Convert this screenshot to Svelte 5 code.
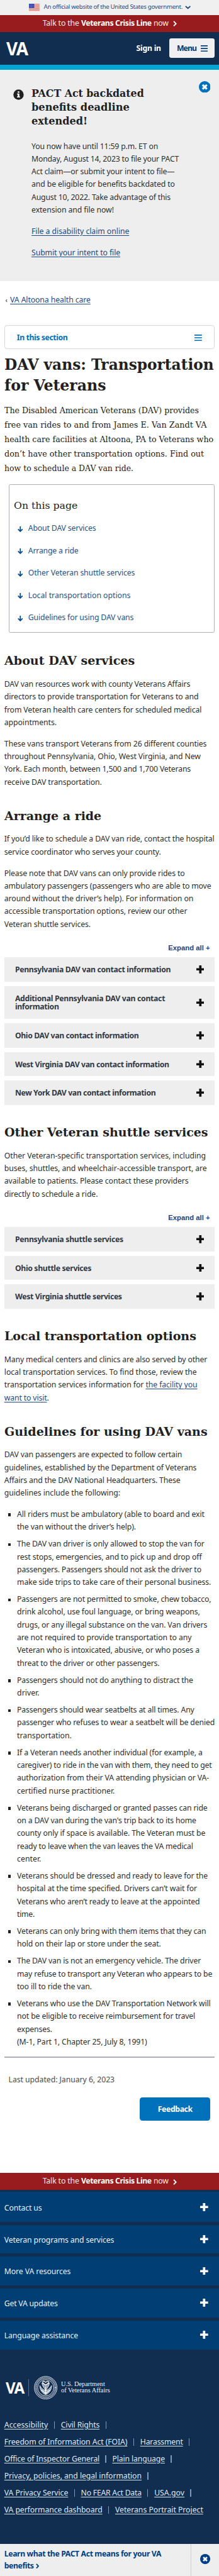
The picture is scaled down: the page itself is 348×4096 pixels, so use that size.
<script>
  // Each text line is [text, width]; the width is the measure it is set to.
  const alertTitle = [['PACT Act backdated', 211.3], ['benefits deadline', 184.3], ['extended!', 105.3]];
  const alertBody = [
    ['You now have until 11:59 p.m. ET on', 237.7],
    ['Monday, August 14, 2023 to file your PACT', 276.7],
    ['Act claim—or submit your intent to file—', 268.7],
    ['and be eligible for benefits backdated to', 269.3],
    ['August 10, 2022. Take advantage of this', 261.3],
    ['extension and file now!', 154.7]
  ];
  const title = [['DAV vans: Transportation', 393.5], ['for Veterans', 191]];
  const intro = [
    ['The Disabled American Veterans (DAV) provides', 365.3],
    ['free van rides to and from James E. Van Zandt VA', 380],
    ['health care facilities at Altoona, PA to Veterans who', 392.7],
    ['don’t have other transportation options. Find out', 375],
    ['how to schedule a DAV van ride.', 242.5]
  ];
  const toc = [
    ['About DAV services', 127.3],
    ['Arrange a ride', 94.3],
    ['Other Veteran shuttle services', 200.3],
    ['Local transportation options', 192.3],
    ['Guidelines for using DAV vans', 198]
  ];
  const about1 = [
    ['DAV van resources work with county Veterans Affairs', 349.3],
    ['directors to provide transportation for Veterans to and', 365],
    ['from Veteran health care centers for scheduled medical', 370.7],
    ['appointments.', 98.3]
  ];
  const about2 = [
    ['These vans transport Veterans from 26 different counties', 380.3],
    ['throughout Pennsylvania, Ohio, West Virginia, and New', 369],
    ['York. Each month, between 1,500 and 1,700 Veterans', 350.3],
    ['receive DAV transportation.', 183.3]
  ];
  const ride1 = [
    ['If you’d like to schedule a DAV van ride, contact the hospital', 394.7],
    ['service coordinator who serves your county.', 294.3]
  ];
  const ride2 = [
    ['Please note that DAV vans can only provide rides to', 339],
    ['ambulatory passengers (passengers who are able to move', 388.7],
    ['around without the driver’s help). For information on', 355.3],
    ['accessible transportation options, review our other', 343.7],
    ['Veteran shuttle services.', 162.3]
  ];
  const vans = [
    [['Pennsylvania DAV van contact information', 292.3]],
    [['Additional Pennsylvania DAV van contact', 281.7], ['information', 82.3]],
    [['Ohio DAV van contact information', 232.3]],
    [['West Virginia DAV van contact information', 289.3]],
    [['New York DAV van contact information', 264]]
  ];
  const other = [
    ['Other Veteran-specific transportation services, including', 378.7],
    ['buses, shuttles, and wheelchair-accessible transport, are', 380.7],
    ['available to patients. Please contact these providers', 346.3],
    ['directly to schedule a ride.', 175.7]
  ];
  const shuttles = [
    [['Pennsylvania shuttle services', 203.3]],
    [['Ohio shuttle services', 143.3]],
    [['West Virginia shuttle services', 200.7]]
  ];
  const guide = [
    ['DAV van passengers are expected to follow certain', 334],
    ['guidelines, established by the Department of Veterans', 361.3],
    ['Affairs and the DAV National Headquarters. These', 330.7],
    ['guidelines include the following:', 217.7]
  ];
  const rules = [
    [['All riders must be ambulatory (able to board and exit', 352], ['the van without the driver’s help).', 223.3]],
    [
      ['The DAV van driver is only allowed to stop the van for', 352],
      ['rest stops, emergencies, and to pick up and drop off', 347],
      ['passengers. Passengers should not ask the driver to', 346.3],
      ['make side trips to take care of their personal business.', 364.3]
    ],
    [
      ['Passengers are not permitted to smoke, chew tobacco,', 364.7],
      ['drink alcohol, use foul language, or bring weapons,', 343.7],
      ['drugs, or any illegal substance on the van. Van drivers', 357.3],
      ['are not required to provide transportation to any', 328],
      ['Veteran who is intoxicated, abusive, or who poses a', 342.7],
      ['threat to the driver or other passengers.', 267.7]
    ],
    [['Passengers should not do anything to distract the', 330.7], ['driver.', 42]],
    [
      ['Passengers should wear seatbelts at all times. Any', 333],
      ['passenger who refuses to wear a seatbelt will be denied', 371.3],
      ['transportation.', 102.7]
    ],
    [
      ['If a Veteran needs another individual (for example, a', 348.3],
      ['caregiver) to ride in the van with them, they need to get', 366],
      ['authorization from their VA attending physician or VA-', 360.7],
      ['certified nurse practitioner.', 183.7]
    ],
    [
      ['Veterans being discharged or granted passes can ride', 357.7],
      ["on a DAV van during the van's trip back to its home", 336.7],
      ['county only if space is available. The Veteran must be', 353.7],
      ['ready to leave when the van leaves the VA medical', 330.7],
      ['center.', 45.3]
    ],
    [
      ['Veterans should be dressed and ready to leave for the', 358.3],
      ['hospital at the time specified. Drivers can’t wait for', 338],
      ['Veterans who aren’t ready to leave at the appointed', 343.3],
      ['time.', 33]
    ],
    [['Veterans can only bring with them items that they can', 355], ['hold on their lap or store under the seat.', 270.3]],
    [
      ['The DAV van is not an emergency vehicle. The driver', 345.3],
      ['may refuse to transport any Veteran who appears to be', 366.7],
      ['too ill to ride the van.', 140.3]
    ],
    [
      ['Veterans who use the DAV Transportation Network will', 363.7],
      ['not be eligible to receive reimbursement for travel', 334.7],
      ['expenses.', 66],
      ['(M-1, Part 1, Chapter 25, July 8, 1991)', 244.3]
    ]
  ];
  const footerItems = [
    ['Contact us', 70.7],
    ['Veteran programs and services', 206.3],
    ['More VA resources', 124.7],
    ['Get VA updates', 100.3],
    ['Language assistance', 138.7]
  ];
  const legal = [
    [['Accessibility', 82.3], ['Civil Rights', 72.7]],
    [['Freedom of Information Act (FOIA)', 231.3], ['Harassment', 80.3]],
    [['Office of Inspector General', 179], ['Plain language', 98.7]],
    [['Privacy, policies, and legal information', 258]],
    [['VA Privacy Service', 120], ['No FEAR Act Data', 113.7], ['USA.gov', 56.7]],
    [['VA performance dashboard', 184.3], ['Veterans Portrait Project', 165.3]]
  ];

  // Sets a run of text to its measure by tracking.
  function fit(node, width) {
    const scale = node.closest('.page').getBoundingClientRect().width / 411.5;
    const natural = node.getBoundingClientRect().width / scale;
    node.style.letterSpacing = (width - natural) / node.textContent.length + 'px';
  }
  // Sets display type to its measure by condensing the letters.
  function condense(node, width) {
    const scale = node.closest('.page').getBoundingClientRect().width / 411.5;
    const natural = node.getBoundingClientRect().width / scale;
    node.style.transform = `scaleX(${width / natural})`;
  }
</script>

{#snippet lines(list)}
  {#each list as [text, w]}<span class="line"><span class="run" use:fit={w}>{text}</span></span>{/each}
{/snippet}

{#snippet display(list)}
  {#each list as [text, w]}<span class="line"><span class="slab" use:condense={w}>{text}</span></span>{/each}
{/snippet}

{#snippet plus()}
  <svg class="plus" viewBox="0 0 15 15"><path d="M5.3 0h4.4v5.3H15v4.2H9.7V15H5.3V9.5H0V5.3h5.3z" fill="currentColor" /></svg>
{/snippet}

{#snippet crisis()}
  <div class="crisis">
    <span class="run" use:fit={68.7}>Talk to the</span>
    <b class="run" use:fit={132.3}>Veterans Crisis Line</b>
    <span class="run" use:fit={28.3}>now</span>
    <svg width="7" height="11" viewBox="0 0 7 11"><path d="M1.2 1 5.5 5.5 1.2 10" fill="none" stroke="#fff" stroke-width="2.2" /></svg>
  </div>
{/snippet}

{#snippet close(size, color)}
  <svg width={size} height={size} viewBox="0 0 22 22">
    <circle cx="11" cy="11" r="11" fill={color} />
    <path d="m7 7 8 8m0-8-8 8" stroke="#fff" stroke-width="3.8" />
  </svg>
{/snippet}

{#snippet accordion(items)}
  <div class="expand"><span class="run" use:fit={78.5}>Expand all +</span></div>
  <div class="accordion">
    {#each items as item}
      <div class="panel"><div class="panel-text">{@render lines(item)}</div>{@render plus()}</div>
    {/each}
  </div>
{/snippet}

<div class="page">
  <div class="gov">
    <svg width="20" height="14" viewBox="0 0 20 14">
      <rect width="20" height="14" fill="#fff" />
      <path d="M0 1h20M0 3.3h20M0 5.6h20M0 7.9h20M0 10.2h20M0 12.8h20" stroke="#dd4a3c" stroke-width="1.2" />
      <rect width="10" height="8" fill="#2a3fb0" />
      <path d="M1 2h8M1 4h8M1 6h8" stroke="#b9c2ee" stroke-width=".8" stroke-dasharray="1 1" />
    </svg>
    <span class="run" use:fit={260.7}>An official website of the United States government.</span>
    <svg class="down" width="11" height="7" viewBox="0 0 11 7"><path d="m1 1 4.5 4L10 1" fill="none" stroke="#1b4480" stroke-width="2.2" /></svg>
  </div>
  {@render crisis()}
  <header>
    <span class="va"><span class="slab" use:condense={40}>VA</span></span>
    <div class="actions">
      <b class="run" use:fit={46.5}>Sign in</b>
      <div class="menu">
        <b class="run" use:fit={36.8}>Menu</b>
        <svg width="13" height="12" viewBox="0 0 13 12"><path d="M0 1h13M0 6h13M0 11h13" stroke="#003e73" stroke-width="2" /></svg>
      </div>
    </div>
  </header>

  <section class="alert">
    <svg class="info" width="20" height="20" viewBox="0 0 20 20">
      <circle cx="10" cy="10" r="9.7" fill="#212121" />
      <path d="M8.5 3.8h3v2.6h-3zM7.2 8h4.3v5.6h1.3v1.9H7.2v-1.9h1.3V9.9H7.2z" fill="#fff" />
    </svg>
    <div class="alert-text">
      <h3>{@render display(alertTitle)}</h3>
      <p>{@render lines(alertBody)}</p>
      <p><span class="run link" use:fit={183.7}>File a disability claim online</span></p>
      <p><span class="run link" use:fit={166.7}>Submit your intent to file</span></p>
    </div>
    <div class="alert-close">{@render close(22, '#0071bb')}</div>
  </section>

  <main>
    <div class="crumb"><span class="back">‹</span><span class="run link" use:fit={151}>VA Altoona health care</span></div>
    <div class="section-nav">
      <b class="run" use:fit={95.3}>In this section</b>
      <svg width="14" height="12" viewBox="0 0 14 12"><path d="M0 1h14M0 6h14M0 11h14" stroke="#0071bb" stroke-width="1.9" /></svg>
    </div>
    <h1>{@render display(title)}</h1>
    <div class="intro">{@render display(intro)}</div>

    <nav class="toc">
      <div class="toc-title">{@render display([['On this page', 119.7]])}</div>
      {#each toc as [text, w]}
        <div class="toc-row">
          <svg width="10" height="11" viewBox="0 0 10 11"><path d="M5 0v9.2M.8 5.2 5 9.4l4.2-4.2" fill="none" stroke="#004795" stroke-width="2" /></svg>
          <span class="run" use:fit={w}>{text}</span>
        </div>
      {/each}
    </nav>

    <h2 class="first">{@render display([['About DAV services', 245]])}</h2>
    <p>{@render lines(about1)}</p>
    <p>{@render lines(about2)}</p>

    <h2>{@render display([['Arrange a ride', 182.3]])}</h2>
    <p>{@render lines(ride1)}</p>
    <p>{@render lines(ride2)}</p>
    {@render accordion(vans)}

    <h2>{@render display([['Other Veteran shuttle services', 382.5]])}</h2>
    <p>{@render lines(other)}</p>
    {@render accordion(shuttles)}

    <h2>{@render display([['Local transportation options', 360.5]])}</h2>
    <p>
      {@render lines([['Many medical centers and clinics are also served by other', 381.3], ['local transportation services. To find those, review the', 361.7]])}
      <span class="line"><span class="run" use:fit={265.7}>transportation services information for&nbsp;</span><span class="run link" use:fit={97}>the facility you</span></span>
      <span class="line"><span class="run link" use:fit={80}>want to visit</span>.</span>
    </p>

    <h2>{@render display([['Guidelines for using DAV vans', 381.5]])}</h2>
    <p>{@render lines(guide)}</p>
    <ul>
      {#each rules as rule}<li>{@render lines(rule)}</li>{/each}
    </ul>
    <hr />
    <div class="updated"><span class="run" use:fit={199.3}>Last updated: January 6, 2023</span></div>
    <div class="feedback"><b class="run" use:fit={65}>Feedback</b></div>
  </main>

  {@render crisis()}
  <footer>
    {#each footerItems as [text, w]}
      <div class="foot-item"><span class="run" use:fit={w}>{text}</span>{@render plus()}</div>
    {/each}
    <div class="brand">
      <span class="va small"><span class="slab" use:condense={34.3}>VA</span></span>
      <i class="rule"></i>
      <svg width="44" height="44" viewBox="0 0 44 44" fill="none" stroke="#fff">
        <circle cx="22" cy="22" r="21.3" stroke-width="1" />
        <circle cx="22" cy="22" r="18.3" stroke="#b9c4d3" stroke-width="3.4" stroke-dasharray="1.5 1" />
        <circle cx="22" cy="22" r="15.2" stroke-width="1" />
        <path d="M22 35c-7-3-11-9-11-17 3 6 7 7 10 10 0-5-5-7-6-15 4 3 5 1 7 4 2-3 3-1 7-4-1 8-6 10-6 15 3-3 7-4 10-10 0 8-4 14-11 17z" fill="#8fa0b8" stroke-width="1" />
        <path d="M16 11c2-2 4-1 6 1 2-2 4-3 6-1-1 4-4 4-6 6-2-2-5-2-6-6zM14 26l8 7 8-7M22 20v15" stroke-width="1.3" />
      </svg>
      <div class="dept">
        <span class="line"><span class="slab" use:condense={82.5}>U.S. Department</span></span>
        <span class="line"><span class="slab" use:condense={92}>of Veterans Affairs</span></span>
      </div>
    </div>
    <div class="legal">
      {#each legal as row, r}
        <div class="legal-row">
          {#each row as [text, w], i}
            <span class="run link" use:fit={w}>{text}</span>
            {#if r < 5 || i < row.length - 1}<i></i>{/if}
          {/each}
        </div>
      {/each}
    </div>
  </footer>
  <div class="promo">
    <div class="promo-text">
      <span class="line"><b class="run" use:fit={294.7}>Learn what the PACT Act means for your VA</b></span>
      <span class="line"><b class="run" use:fit={55.3}>benefits</b><svg width="6" height="10" viewBox="0 0 6 10"><path d="m1 1 3.8 4L1 9" fill="none" stroke="#004085" stroke-width="2.2" /></svg></span>
    </div>
    <div class="promo-close">{@render close(19, '#003e8a')}</div>
  </div>
</div>

<style>
  :global(body) { background: #fff; overflow: hidden; }
  .page {
    zoom: 0.84576;
    width: 411.5px;
    height: 4843px;
    overflow: hidden;
    font: 14.5px/24px "Noto Sans", "Open Sans", sans-serif;
    color: #2e2e2e;
  }
  .page :global(*) { box-sizing: border-box; }
  svg { display: block; flex: none; }
  .line { display: block; white-space: nowrap; }
  .run { display: inline-block; white-space: pre; vertical-align: top; }
  .slab { display: inline-block; white-space: pre; transform-origin: 0 50%; vertical-align: top; }
  h1, h2, h3, p, ul { margin: 0; padding: 0; }
  h1, h2, h3, .intro, .toc-title { font-family: "DejaVu Serif Condensed", "DejaVu Serif", serif; color: #212121; }
  .link { color: #1d4a86; text-decoration: underline; text-underline-offset: 2px; text-decoration-thickness: 1px; }

  .gov { height: 28px; background: #f0f0f0; display: flex; align-items: center; padding-left: 54px; font-size: 11.5px; color: #1f4a8a; }
  .gov .run { margin-left: 8.3px; line-height: 20px; }
  .gov .down { margin-left: 4.5px; }
  .crisis { height: 32px; background: #981b1e; color: #fbe5e5; display: flex; align-items: center; padding-left: 80px; }
  .crisis b { color: #fff; margin: 0 3.7px; }
  .crisis svg { margin: 2px 0 0 8.5px; }

  header { height: 71px; background: #112e51; border-bottom: 10px solid #00a6d2; display: flex; justify-content: space-between; align-items: center; padding: 0 8px 0 12px; color: #fff; }
  .va { display: block; width: 40px; font-weight: 700; font-size: 34px; line-height: 40px; letter-spacing: -1.5px; color: #fff; }
  .actions { display: flex; align-items: center; gap: 16px; }
  .menu { width: 85px; height: 37px; border-radius: 4px; background: #f0f0f3; color: #003e73; display: flex; align-items: center; padding-left: 13.7px; gap: 8.5px; }

  .alert { height: 398px; background: #eee; display: flex; padding: 0 16px 0 24.5px; }
  .info { margin-top: 36.5px; }
  .alert-text { width: 313px; margin-left: 14.7px; padding-top: 32px; }
  h3 { font-size: 19px; line-height: 26px; margin-bottom: 22.2px; }
  .alert-text p { margin-bottom: 16px; }
  .alert-close { margin: 21px 0 0 auto; }

  main { height: 3556px; padding: 22.7px 8px 0; }
  .crumb { display: flex; height: 24px; padding-left: 2px; }
  .back { width: 9px; font-size: 13px; }
  .section-nav { margin-top: 35.3px; height: 45px; border: 1px solid #d6d7d9; border-radius: 5px; display: flex; justify-content: space-between; align-items: center; padding: 4px 23px 0 22.5px; color: #0071bb; }
  .section-nav svg { margin-top: -2px; }
  h1 { margin-top: 9.9px; font-size: 28.5px; line-height: 39.3px; }
  .intro { margin-top: 13.5px; font-size: 15px; line-height: 27.2px; }
  .toc { margin: 16px 0 0 8px; height: 280px; border: 1px solid #aeb0b5; border-radius: 3px; padding: 26px 0 0 8.5px; color: #275288; }
  .toc-title { font-size: 18.5px; line-height: 26px; margin-bottom: 18.6px; }
  .toc-row { height: 24px; margin-bottom: 18px; display: flex; align-items: center; padding-left: 8px; gap: 9.3px; }
  .toc-row svg { margin-top: 2px; }

  h2 { margin: 36.8px 0 15.7px; font-size: 23px; line-height: 31px; }
  h2.first { margin-top: 37.3px; margin-bottom: 16.4px; }
  p + p { margin-top: 16px; }
  .alert-text p + p { margin-top: 0; }
  .expand { margin-top: 24.8px; height: 16px; text-align: right; padding-right: 9px; font: bold 13.33px/16px "Liberation Sans", Arial, sans-serif; color: #1b4480; }
  .accordion { margin-top: 9.2px; display: grid; gap: 8.3px; }
  .panel { background: #eee; min-height: 45.7px; display: flex; align-items: center; justify-content: space-between; padding: 14.3px 20px 14.3px 20.3px; line-height: 16px; font-weight: 700; color: #323a45; }
  .panel-text { padding-top: 1px; }
  .plus { width: 15px; height: 15px; color: #111; }
  ul { list-style: none; margin-top: 15.7px; }
  li { position: relative; padding-left: 24px; margin-bottom: 8px; }
  li::before { content: ""; position: absolute; left: 7px; top: 10px; width: 5.5px; height: 5.5px; background: #212121; }
  hr { margin: 15.6px 0 0; border: 0; height: 2px; background: #aeb0b5; }
  .updated { margin: 29.4px 0 0 8px; color: #4b4b4b; }
  .feedback { margin: 20.6px 8px 0 auto; width: 133px; height: 44px; background: #0071bb; color: #fff; border-radius: 5px; text-align: center; line-height: 45px; }

  footer { height: 666px; background: #112e51; padding-top: 3px; color: #e6f1fb; }
  .foot-item { height: 57px; background: #003e73; margin-bottom: 6px; display: flex; align-items: center; justify-content: space-between; padding: 6px 20px 0 8px; }
  .foot-item + .foot-item { height: 54px; padding-top: 3px; }
  .foot-item .plus { color: #fff; margin-top: -4px; }
  .brand { display: flex; align-items: center; height: 44px; margin-top: 50px; padding-left: 11px; }
  .small { width: 34.3px; font-size: 30px; line-height: 44px; }
  .rule { width: 1px; height: 32px; background: #5b6f8a; margin: 0 9px 0 8px; }
  .dept { margin-left: 8px; font: 11px/12.7px "Liberation Serif", serif; }
  .legal { margin-top: 32px; }
  .legal-row { display: flex; align-items: center; height: 32px; padding-left: 8px; }
  .legal-row .link { color: #dce9f7; }
  .legal-row i { width: 1.5px; height: 14px; background: #7d98b8; margin: 0 11.6px 0 11px; }

  .promo { height: 60px; background: #eee; display: flex; color: #004085; }
  .promo-text { width: 359px; padding: 8.5px 0 0 8px; line-height: 21.8px; border-right: 1px solid #d0d0d0; }
  .promo-text .line { display: flex; align-items: center; gap: 4px; }
  .promo-close { padding: 19px 0 0 17px; }
</style>
